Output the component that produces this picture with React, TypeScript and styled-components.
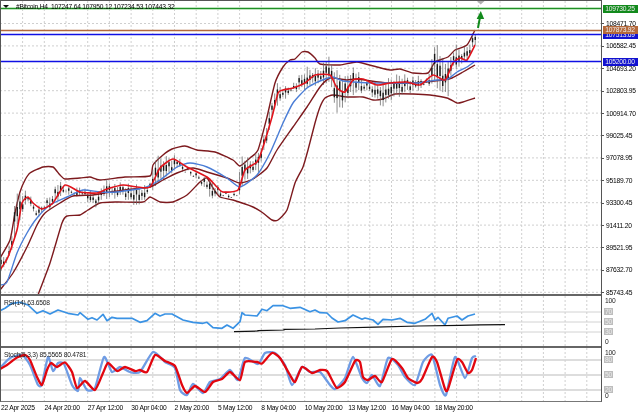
import React, { FC } from "react";
import styled, { createGlobalStyle } from "styled-components";

type Pt = [number, number];

const stepX = 21.7;
const gridXs = Array.from({ length: 27 }, (_, i) => 22.6 + i * stepX);
const mainPrices = [
  "108471.70", "106582.45", "104693.20", "102803.95", "100914.70", "99025.45", "97078.95",
  "95189.70", "93300.45", "91411.20", "89521.95", "87632.70", "85743.45",
];
const timeLabels = [
  "22 Apr 2025", "24 Apr 20:00", "27 Apr 12:00", "30 Apr 04:00", "2 May 20:00", "5 May 12:00",
  "8 May 04:00", "10 May 20:00", "13 May 12:00", "16 May 04:00", "18 May 20:00",
];

const upperBand: Pt[] = [
  [0, 258], [10, 240], [15, 213], [20, 192], [25, 180], [30, 173], [43, 167], [53, 167], [60, 175], [65, 179],
  [80, 178], [90, 177], [100, 180], [125, 177], [150, 176], [153, 165], [163, 155], [172, 149], [185, 146],
  [197, 150], [215, 152], [233, 160], [240, 166], [250, 158], [258, 150], [267, 117], [275, 83], [283, 67],
  [290, 60], [295, 59], [302, 52], [308, 52], [315, 58], [320, 64], [340, 65], [357, 62], [377, 67], [390, 70],
  [400, 69], [413, 73], [428, 73], [435, 62], [448, 57], [455, 50], [467, 45], [475, 30],
];
const lowerBand: Pt[] = [
  [38, 295], [50, 263], [62, 223], [67, 216], [80, 215], [88, 210], [100, 203], [117, 202], [143, 202], [150, 197],
  [160, 202], [173, 202], [187, 195], [200, 182], [207, 178], [213, 188], [220, 197], [233, 200], [253, 207],
  [263, 213], [272, 220], [278, 220], [287, 210], [295, 183], [303, 167], [308, 150], [315, 123], [320, 107],
  [325, 98], [333, 95], [347, 97], [363, 97], [373, 100], [383, 99], [395, 94], [413, 94], [430, 95], [447, 98],
  [457, 103], [463, 102], [475, 98],
];
const middleBand: Pt[] = [
  [0, 290], [13, 273], [27, 247], [37, 225], [45, 213], [60, 203], [73, 196], [93, 195], [110, 192], [133, 189],
  [150, 187], [163, 180], [177, 173], [193, 168], [207, 172], [227, 178], [240, 183], [253, 179], [267, 168],
  [277, 150], [293, 127], [307, 107], [320, 87], [330, 78], [347, 80], [357, 79], [387, 83], [413, 83], [443, 80],
  [452, 78], [463, 72], [475, 65],
];
const blueMa: Pt[] = [
  [0, 285], [7, 282], [17, 253], [27, 233], [37, 218], [50, 205], [67, 197], [83, 190], [100, 192], [117, 192],
  [143, 188], [160, 180], [177, 167], [190, 163], [207, 167], [227, 178], [240, 187], [257, 175], [270, 153],
  [283, 123], [293, 103], [307, 88], [320, 81], [333, 77], [343, 81], [370, 83], [393, 83], [417, 83], [437, 80],
  [448, 79], [457, 72], [467, 67], [474, 62],
];
const redMa: Pt[] = [
  [0, 270], [8, 257], [17, 230], [22, 203], [28, 197], [33, 203], [42, 209], [53, 203], [65, 185], [80, 192],
  [97, 193], [107, 189], [123, 185], [137, 187], [150, 187], [160, 168], [173, 159], [187, 167], [207, 177],
  [217, 187], [223, 192], [238, 190], [245, 170], [257, 162], [262, 150], [272, 117], [278, 93], [283, 90],
  [293, 88], [305, 83], [315, 75], [330, 75], [337, 88], [345, 92], [353, 80], [363, 79], [377, 85], [390, 83],
  [407, 82], [420, 85], [433, 75], [445, 80], [453, 63], [460, 58], [467, 60], [475, 45],
];

// rough outline of the candle highs and lows, the candles are filled in between
const highs: Pt[] = [
  [0, 258], [8, 250], [12, 232], [15, 194], [20, 190], [25, 188], [30, 195], [35, 205], [40, 205], [50, 193],
  [58, 180], [65, 185], [75, 188], [80, 183], [90, 190], [97, 194], [105, 177], [115, 182], [130, 183], [150, 183],
  [155, 155], [165, 155], [175, 153], [185, 165], [200, 172], [212, 180], [225, 190], [238, 190], [241, 153],
  [250, 158], [258, 150], [265, 130], [272, 100], [276, 82], [285, 85], [295, 80], [307, 66], [315, 67], [320, 65],
  [328, 55], [335, 68], [345, 75], [353, 65], [365, 80], [385, 80], [400, 72], [415, 75], [428, 78], [432, 52],
  [437, 40], [442, 55], [448, 62], [455, 43], [462, 48], [468, 42], [473, 30], [475, 30],
];
const lows: Pt[] = [
  [0, 272], [8, 265], [12, 250], [18, 225], [25, 208], [30, 205], [36, 220], [40, 215], [50, 210], [60, 198],
  [65, 195], [80, 197], [95, 208], [105, 200], [120, 198], [140, 208], [150, 192], [165, 180], [175, 170], [190, 175],
  [205, 190], [212, 200], [225, 198], [238, 200], [241, 190], [250, 175], [258, 175], [265, 150], [272, 120],
  [278, 105], [290, 95], [305, 90], [320, 85], [330, 85], [337, 115], [343, 107], [350, 97], [365, 92], [375, 100],
  [383, 108], [395, 98], [410, 94], [425, 88], [435, 85], [442, 95], [448, 98], [452, 70], [460, 68], [468, 62],
  [475, 45],
];

const rsi: Pt[] = [
  [0, 310.7], [5, 308.3], [12, 303.3], [20, 302.3], [28, 305], [37, 313.3], [43, 310.7], [50, 314], [58, 310],
  [68, 313.3], [78, 315], [80, 312.7], [88, 319.3], [92, 317.7], [97, 320], [103, 314.3], [107, 320.7], [112, 317.3],
  [117, 318.3], [132, 318.3], [140, 322.3], [147, 320.7], [155, 313.3], [160, 316], [165, 314], [172, 314], [183, 320],
  [193, 322.3], [203, 323.3], [207, 322.3], [213, 327.7], [222, 328.3], [227, 325], [233, 328.3], [240, 321.7],
  [242, 312.7], [245, 315], [257, 316], [262, 309.3], [267, 310.7], [273, 305.7], [283, 305.7], [290, 308.3],
  [300, 307.3], [310, 311.7], [315, 310], [320, 312.7], [327, 313], [332, 318], [338, 322], [345, 320.7], [353, 315],
  [362, 319.3], [365, 318], [373, 320], [378, 324.3], [383, 319.3], [392, 320], [400, 318.3], [407, 322.3],
  [415, 323.3], [425, 319.3], [432, 313.3], [435, 320], [438, 317.3], [445, 325], [448, 318.3], [457, 316], [462, 320],
  [468, 316], [475, 314],
];
const stochMain: Pt[] = [
  [0, 368], [10, 358], [22, 355], [30, 365], [38, 385], [42, 384], [48, 357], [53, 371], [58, 363], [64, 364], [72, 385],
  [78, 391], [80, 378], [87, 390], [95, 388], [104, 357], [112, 372], [120, 367], [130, 372], [140, 372], [153, 352],
  [165, 362], [175, 368], [180, 390], [187, 395], [193, 384], [203, 393], [210, 382], [220, 379], [230, 370], [238, 380],
  [245, 358], [258, 364], [265, 353], [275, 353], [285, 365], [292, 385], [302, 367], [310, 372], [320, 372], [330, 385],
  [335, 389], [345, 378], [353, 357], [362, 378], [367, 383], [372, 375], [380, 386], [388, 358], [398, 365], [405, 377],
  [415, 385], [423, 362], [432, 355], [440, 385], [446, 395], [455, 357], [465, 378], [472, 358], [476, 356],
];
const stochSignal: Pt[] = [
  [0, 369], [7, 365], [17, 357.5], [25, 355], [30, 360], [37, 377], [42, 385], [47, 370], [51, 363], [57, 367],
  [65, 362.5], [72, 372], [77, 388], [85, 381], [95, 390], [103, 373], [108, 363], [117, 371], [125, 367], [135, 371],
  [140, 370], [147, 372], [155, 355], [165, 361], [175, 366], [182, 385], [187, 393], [195, 386], [205, 392], [213, 382],
  [222, 379], [230, 372], [240, 380], [245, 362], [257, 362], [262, 363.5], [272, 353], [280, 358], [290, 375], [295, 382],
  [302, 367], [312, 373], [320, 370], [327, 371], [332, 380], [337, 388], [345, 382], [355, 361], [360, 362], [363, 377],
  [368, 380], [375, 376], [382, 382], [392, 359], [402, 368], [408, 378], [417, 383], [422, 379], [432, 357], [437, 362],
  [445, 389], [448, 389], [457, 360], [462, 362], [468, 373], [472, 370], [476, 358],
];

// Catmull-Rom through the points, with a low tension so the peaks don't overshoot
const tension = 10;
const smooth = (line: Pt[]) => {
  let d = `M${line[0][0]} ${line[0][1]}`;
  for (let i = 0; i < line.length - 1; i++) {
    const p0 = line[Math.max(i - 1, 0)];
    const p1 = line[i];
    const p2 = line[i + 1];
    const p3 = line[Math.min(i + 2, line.length - 1)];
    const c1x = p1[0] + (p2[0] - p0[0]) / tension;
    const c1y = p1[1] + (p2[1] - p0[1]) / tension;
    const c2x = p2[0] - (p3[0] - p1[0]) / tension;
    const c2y = p2[1] - (p3[1] - p1[1]) / tension;
    d += ` C${c1x.toFixed(1)} ${c1y.toFixed(1)} ${c2x.toFixed(1)} ${c2y.toFixed(1)} ${p2[0]} ${p2[1]}`;
  }
  return d;
};

const pts = (line: Pt[]) => line.map(([x, y]) => `${x},${y}`).join(" ");

const lerp = (line: Pt[], x: number) => {
  for (let i = 1; i < line.length; i++) {
    if (x <= line[i][0]) {
      const [x0, y0] = line[i - 1];
      const [x1, y1] = line[i];
      return y0 + ((y1 - y0) * (x - x0)) / (x1 - x0);
    }
  }
  return line[line.length - 1][1];
};

const candles = Array.from({ length: 176 }, (_, i) => {
  const x = 1 + i * 2.71;
  const high = lerp(highs, x) + ((i * 37) % 11) * 0.7;
  const low = lerp(lows, x) - ((i * 23) % 7) * 0.8;
  const range = Math.max(low - high, 2);
  const top = high + range * (0.2 + ((i * 13) % 5) * 0.08);
  return { x, high, low, top, height: range * 0.3 };
});

const Grid: FC<{ top: number; bottom: number; rows?: number[] }> = ({ top, bottom, rows = [] }) => (
  <g stroke="#cfcfcf" strokeWidth="1" strokeDasharray="2 2">
    {gridXs.map((x) => (
      <line key={x} x1={x} x2={x} y1={top} y2={bottom} />
    ))}
    {rows.map((y) => (
      <line key={y} x1="0" x2="602" y1={y} y2={y} />
    ))}
  </g>
);

const Levels: FC<{ ys: number[]; width: number }> = ({ ys, width }) => (
  <g stroke="#d2d2d2" strokeWidth={width}>
    {ys.map((y) => (
      <line key={y} x1="0" x2="602" y1={y} y2={y} />
    ))}
  </g>
);

const MainChart: FC = () => (
  <PaneSvg $h={293} viewBox="1 1 600 293">
    <Grid top={1} bottom={294} rows={mainPrices.map((_, i) => 23.5 + i * 22.4)} />
    <g fill="none" stroke="#7d1a1e" strokeWidth="1.4">
      <path d={smooth(upperBand)} />
      <path d={smooth(lowerBand)} />
    </g>
    {candles.map((c) => (
      <g key={c.x}>
        <line x1={c.x} x2={c.x} y1={c.high} y2={c.low} stroke="#666" strokeWidth="0.75" />
        <rect x={c.x - 0.7} y={c.top} width="1.4" height={c.height} fill="#1a1a1a" />
      </g>
    ))}
    <g fill="none">
      <path d={smooth(middleBand)} stroke="#7d1a1e" strokeWidth="1.4" />
      <path d={smooth(blueMa)} stroke="#4a7dd6" strokeWidth="1.4" />
      <path d={smooth(redMa)} stroke="#e0141c" strokeWidth="1.6" />
    </g>
    <line x1="0" x2="602" y1="8.5" y2="8.5" stroke="#a8dca8" strokeWidth="2.4" />
    <line x1="0" x2="602" y1="8.5" y2="8.5" stroke="#1f8f25" strokeWidth="1" />
    <line x1="0" x2="602" y1="30.5" y2="30.5" stroke="#b4683a" strokeWidth="1.4" />
    <line x1="0" x2="602" y1="34.5" y2="34.5" stroke="#1010e4" strokeWidth="1.5" />
    <line x1="0" x2="602" y1="61.5" y2="61.5" stroke="#1010e4" strokeWidth="1.5" />
    <polygon points="477,1 484.5,1 480.7,4.5" fill="#b0b0b0" />
    <path d="M478 28 L480 17" stroke="#128a1c" strokeWidth="2" fill="none" />
    <polygon points="480.8,11 476.6,19 484.2,19" fill="#128a1c" />
  </PaneSvg>
);

const RsiChart: FC = () => (
  <PaneSvg $h={50} viewBox="1 296 600 50">
    <Grid top={296} bottom={346} />
    <Levels ys={[312, 322, 332]} width={1} />
    <polyline points={pts(rsi)} fill="none" stroke="#3a92e4" strokeWidth="1.7" strokeLinejoin="round" />
    <polyline points="234,331.7 258,331 258,330.6 284,330 284,329.4 315,329 340,328 375,327.2 418,326 460,325.4 480,324.8 505,324.6" fill="none" stroke="#111" strokeWidth="1.2" />
  </PaneSvg>
);

const StochChart: FC = () => (
  <PaneSvg $h={53} viewBox="1 348 600 53">
    <Grid top={348} bottom={401} />
    <Levels ys={[360, 375, 390]} width={1.6} />
    <path d={smooth(stochMain)} fill="none" stroke="#6f9ce4" strokeWidth="2.3" />
    <path d={smooth(stochSignal)} fill="none" stroke="#e2060f" strokeWidth="2.3" />
  </PaneSvg>
);

const rsiAxis = [
  { text: "100", h: 10 },
  { text: "70", h: 12, level: true },
  { text: "50", h: 8, level: true },
  { text: "30", h: 12, level: true },
  { text: "0", h: 8 },
];
const stochAxis = [
  { text: "100", h: 10 },
  { text: "80", h: 4, level: true },
  { text: "50", h: 26, level: true },
  { text: "20", h: 4, level: true },
  { text: "0", h: 9 },
];

const ScaleAxis: FC<{ rows: { text: string; h: number; level?: boolean }[]; $h: number }> = ({ rows, $h }) => (
  <ScaleColumn $h={$h}>
    {rows.map((r) => (
      <ScaleRow key={r.text} $h={r.h}>
        <ScaleText $level={r.level}>{r.text}</ScaleText>
      </ScaleRow>
    ))}
  </ScaleColumn>
);

export default function App() {
  return (
    <Page>
      <GlobalStyle />
      <ChartRow>
        <Panes>
          <Pane>
            <Legend $dark>
              <Caret />
              #Bitcoin,H4&nbsp; 107247.64 107950.12 107234.53 107443.32
            </Legend>
            <MainChart />
          </Pane>
          <Divider />
          <Pane>
            <Legend>RSI(14) 63.6508</Legend>
            <RsiChart />
          </Pane>
          <Divider />
          <Pane>
            <Legend>Stoch(5,3,3) 85.5565 80.4781</Legend>
            <StochChart />
          </Pane>
        </Panes>
        <AxisColumn>
          <PriceAxis>
            {mainPrices.map((p) => (
              <PriceRow key={p}>{p}</PriceRow>
            ))}
            <PriceTag $top={4.5} $bg="#128a1c">109730.25</PriceTag>
            <PriceTag $top={31} $bg="#1212d0">107513.69</PriceTag>
            <PriceTag $top={26} $bg="#b4683a">107873.92</PriceTag>
            <PriceTag $top={57.5} $bg="#1212d0">105200.00</PriceTag>
          </PriceAxis>
          <ScaleAxis rows={rsiAxis} $h={50} />
          <ScaleAxis rows={stochAxis} $h={53} />
        </AxisColumn>
      </ChartRow>
      <TimeAxis>
        {timeLabels.map((t) => (
          <TimeCell key={t}>{t}</TimeCell>
        ))}
      </TimeAxis>
    </Page>
  );
}

const GlobalStyle = createGlobalStyle`
  html, body {
    margin: 0;
    padding: 0;
    background: #fff;
  }
`;

const Page = styled.div`
  width: 640px;
  height: 416px;
  overflow: hidden;
  background: #fff;
  color: #000;
  font-family: "Liberation Sans", Arial, sans-serif;
  font-size: 6.7px;
  letter-spacing: -0.22px;
  display: flex;
  flex-direction: column;
  filter: blur(0.2px);
`;

const ChartRow = styled.div`
  display: flex;
  height: 402px;
`;

const Panes = styled.div`
  width: 602px;
  box-sizing: border-box;
  border-top: 1px solid #555;
  border-left: 1px solid #555;
  border-right: 1px solid #555;
  border-bottom: 1px solid #777;
  display: flex;
  flex-direction: column;
`;

const Pane = styled.div`
  position: relative;
  display: flex;
`;

const PaneSvg = styled.svg<{ $h: number }>`
  display: block;
  width: 600px;
  height: ${(p) => p.$h}px;
`;

const Divider = styled.div`
  height: 2px;
  background: #666;
`;

const Legend = styled.div<{ $dark?: boolean }>`
  position: absolute;
  left: ${(p) => (p.$dark ? "0" : "3px")};
  top: ${(p) => (p.$dark ? "2px" : "3px")};
  display: flex;
  align-items: center;
  line-height: 7px;
  white-space: pre;
  color: ${(p) => (p.$dark ? "#000" : "#222")};
`;

const Caret = styled.span`
  width: 0;
  height: 0;
  margin: 0 7px 0 2px;
  border-left: 3px solid transparent;
  border-right: 3px solid transparent;
  border-top: 3px solid #111;
`;

const AxisColumn = styled.div`
  flex: 1;
  display: flex;
  flex-direction: column;
`;

const PriceAxis = styled.div`
  position: relative;
  height: 295px;
  box-sizing: border-box;
  padding-top: 12.3px;
`;

const PriceRow = styled.div`
  height: 22.4px;
  display: flex;
  align-items: center;
  padding-left: 4px;
  line-height: 7px;
  position: relative;

  &::before {
    content: "";
    position: absolute;
    left: 0;
    top: 50%;
    width: 2px;
    height: 1px;
    background: #555;
  }
`;

const PriceTag = styled.div<{ $top: number; $bg: string }>`
  position: absolute;
  left: 0.5px;
  top: ${(p) => p.$top}px;
  width: 35px;
  height: 8px;
  line-height: 8px;
  text-align: center;
  color: #eee;
  background: ${(p) => p.$bg};
`;

const ScaleColumn = styled.div<{ $h: number }>`
  height: ${(p) => p.$h}px;
  margin-bottom: 2px;
  box-sizing: border-box;
  padding-top: 1px;
  display: flex;
  flex-direction: column;
`;

const ScaleRow = styled.div<{ $h: number }>`
  height: ${(p) => p.$h}px;
  display: flex;
  align-items: center;
  padding-left: 2px;
`;

const ScaleText = styled.span<{ $level?: boolean }>`
  line-height: 7px;
  padding: 0 1px;
  color: ${(p) => (p.$level ? "#eee" : "#222")};
  background: ${(p) => (p.$level ? "#bdbdbd" : "transparent")};
`;

const TimeAxis = styled.div`
  display: flex;
  padding: 2px 0 0 1px;
  line-height: 8px;
  white-space: nowrap;
`;

const TimeCell = styled.div`
  width: 43.4px;
  flex: none;
`;
